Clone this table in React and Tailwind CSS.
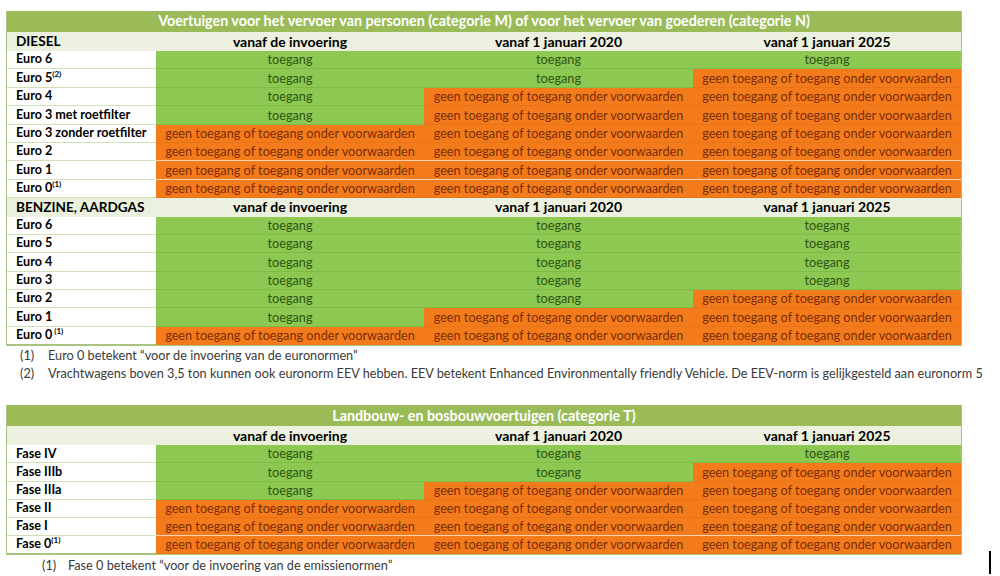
import React from "react";

const diesel = [
  { label: "Euro 6", c: ["g", "g", "g"] },
  { label: "Euro 5", sup: "(2)", c: ["g", "g", "o"] },
  { label: "Euro 4", c: ["g", "o", "o"] },
  { label: "Euro 3 met roetfilter", c: ["g", "o", "o"] },
  { label: "Euro 3 zonder roetfilter", c: ["o", "o", "o"] },
  { label: "Euro 2", c: ["o", "o", "o"], white: true },
  { label: "Euro 1", c: ["o", "o", "o"], white: true },
  { label: "Euro 0", sup: "(1)", c: ["o", "o", "o"] },
];

const benzine = [
  { label: "Euro 6", c: ["g", "g", "g"] },
  { label: "Euro 5", c: ["g", "g", "g"] },
  { label: "Euro 4", c: ["g", "g", "g"] },
  { label: "Euro 3", c: ["g", "g", "g"] },
  { label: "Euro 2", c: ["g", "g", "o"] },
  { label: "Euro 1", c: ["g", "o", "o"] },
  { label: "Euro 0", sup: " (1)", c: ["o", "o", "o"] },
];

const fases = [
  { label: "Fase IV", c: ["g", "g", "g"] },
  { label: "Fase IIIb", c: ["g", "g", "o"] },
  { label: "Fase IIIa", c: ["g", "o", "o"] },
  { label: "Fase II", c: ["o", "o", "o"] },
  { label: "Fase I", c: ["o", "o", "o"], white: true },
  { label: "Fase 0", sup: "(1)", c: ["o", "o", "o"] },
];

const widths = ["w-[268px]", "w-[269px]", "w-[268px]"];

function Cell({ s, w, white, last }) {
  const base = `${w} flex items-center justify-center border-b`;
  if (s === "g") {
    return (
      <div className={`${base} bg-[#8dc853] text-[#2d5412] ${last ? "border-[#8dc853]" : "border-[#7fbb47]"}`}>
        toegang
      </div>
    );
  }
  return (
    <div className={`${base} bg-[#f47b1c] text-[#7a2e06] ${white ? "border-[#fbd3b0]" : last ? "border-[#f47b1c]" : "border-[#e97316]"}`}>
      geen toegang of toegang onder voorwaarden
    </div>
  );
}

function Row({ r, h, last }) {
  return (
    <div className={`flex ${h}`}>
      <div className={`w-[149px] flex items-center pl-[9px] bg-white font-bold text-black text-[12.6px] border-b ${last ? "border-[#a9c47f]" : "border-[#d3e0b6]"}`}>
        <span>
          {r.label}
          {r.sup && <sup className="text-[8px] -top-[5px]">{r.sup}</sup>}
        </span>
      </div>
      {r.c.map((s, i) => (
        <Cell key={i} s={s} w={widths[i]} white={r.white} last={last} />
      ))}
    </div>
  );
}

function Header({ label, h }) {
  return (
    <div className={`flex ${h} bg-[#ebf1de] font-bold text-black text-[14px]`}>
      <div className="w-[149px] flex items-center pl-[9px] text-[13.6px]">{label}</div>
      <div className="w-[268px] flex items-center justify-center">vanaf de invoering</div>
      <div className="w-[269px] flex items-center justify-center">vanaf 1 januari 2020</div>
      <div className="w-[268px] flex items-center justify-center">vanaf 1 januari 2025</div>
    </div>
  );
}

function Title({ children }) {
  return (
    <div className="h-[21px] bg-[#9bbb59] text-white font-bold text-[14.3px] flex items-center justify-center">
      {children}
    </div>
  );
}

export default function App() {
  return (
    <div className="relative w-[1000px] h-[576px] bg-white font-['Lato','Open_Sans',sans-serif] text-[12.7px] leading-none overflow-hidden">
      <div className="pt-[11px] pl-[6px]">
        <div className="w-[956px] border-x border-b border-[#a9c47f]">
          <Title>
            Voertuigen voor het vervoer van personen (categorie M) of voor het vervoer van goederen (categorie N)
          </Title>
          <Header label="DIESEL" h="h-[19px]" />
          {diesel.map((r, i) => (
            <Row key={i} r={r} h="h-[18.4px]" />
          ))}
          <Header label="BENZINE, AARDGAS" h="h-[18.4px]" />
          {benzine.map((r, i) => (
            <Row key={i} r={r} h="h-[18.4px]" last={i === benzine.length - 1} />
          ))}
        </div>
        <div className="text-[12.7px] text-[#3a3a3a]">
          <div className="flex h-[18px] items-center pl-[14px]">
            <span className="w-[28px]">(1)</span>
            <span>Euro 0 betekent “voor de invoering van de euronormen”</span>
          </div>
          <div className="flex h-[18px] items-center pl-[14px]">
            <span className="w-[28px]">(2)</span>
            <span className="whitespace-nowrap">
              Vrachtwagens boven 3,5 ton kunnen ook euronorm EEV hebben. EEV betekent Enhanced Environmentally friendly Vehicle. De EEV-norm is gelijkgesteld aan euronorm 5
            </span>
          </div>
        </div>
        <div className="mt-[23px] w-[956px] border-x border-b border-[#a9c47f]">
          <Title>Landbouw- en bosbouwvoertuigen (categorie T)</Title>
          <Header label="" h="h-[19px]" />
          {fases.map((r, i) => (
            <Row key={i} r={r} h="h-[18.2px]" last={i === fases.length - 1} />
          ))}
        </div>
        <div className="flex h-[19px] items-center pl-[36px] text-[12.7px] text-[#3a3a3a]">
          <span className="w-[26px]">(1)</span>
          <span>Fase 0 betekent “voor de invoering van de emissienormen”</span>
        </div>
      </div>
      <div className="absolute left-[989px] top-[551px] w-[2px] h-[23px] bg-black" />
    </div>
  );
}
